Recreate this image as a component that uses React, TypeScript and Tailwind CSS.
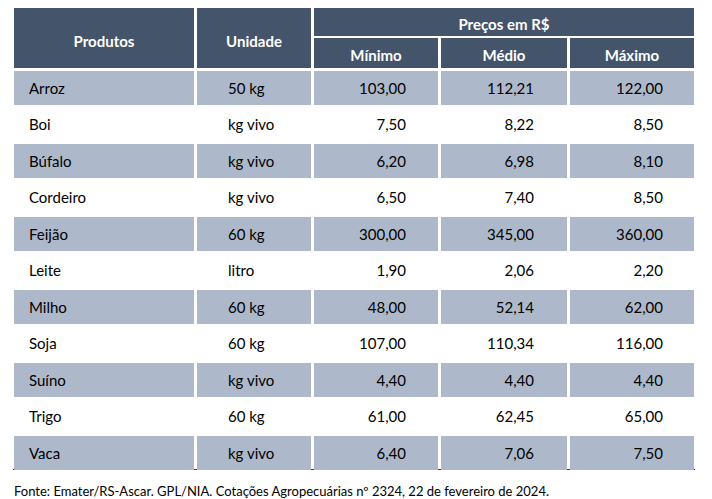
const rows = [
  ["Arroz", "50 kg", "103,00", "112,21", "122,00"],
  ["Boi", "kg vivo", "7,50", "8,22", "8,50"],
  ["Búfalo", "kg vivo", "6,20", "6,98", "8,10"],
  ["Cordeiro", "kg vivo", "6,50", "7,40", "8,50"],
  ["Feijão", "60 kg", "300,00", "345,00", "360,00"],
  ["Leite", "litro", "1,90", "2,06", "2,20"],
  ["Milho", "60 kg", "48,00", "52,14", "62,00"],
  ["Soja", "60 kg", "107,00", "110,34", "116,00"],
  ["Suíno", "kg vivo", "4,40", "4,40", "4,40"],
  ["Trigo", "60 kg", "61,00", "62,45", "65,00"],
  ["Vaca", "kg vivo", "6,40", "7,06", "7,50"],
];

const cols = "grid grid-cols-[180px_114px_124px_126px_124px] gap-x-[3px]";

export default function App() {
  return (
    <div className="w-[712px] h-[499px] bg-white pt-[8px] pl-[14px] font-['Lato','Liberation_Sans',sans-serif] text-[15px] text-black">
      {/* Header */}
      <div className={`${cols} grid-rows-[28px_30px] gap-y-[2px] w-[680px] text-white font-bold`}>
        <div className="row-span-2 bg-[#44546a] flex items-center justify-center pt-[6px]">Produtos</div>
        <div className="row-span-2 bg-[#44546a] flex items-center justify-center pt-[6px]">Unidade</div>
        <div className="col-span-3 bg-[#44546a] flex items-center justify-center pt-[4px]">Preços em R$</div>
        <div className="bg-[#44546a] flex items-center justify-center pt-[4px]">Mínimo</div>
        <div className="bg-[#44546a] flex items-center justify-center pt-[4px]">Médio</div>
        <div className="bg-[#44546a] flex items-center justify-center pt-[4px]">Máximo</div>
      </div>

      {/* Body */}
      <div className="mt-[1.5px] w-[680px]">
        {rows.map((r, i) => {
          const shade = i % 2 === 0 ? "bg-[#adb9ca]" : "";
          return (
            <div key={r[0]} className={`${cols} h-[36.5px] py-[1.5px]`}>
              <div className={`${shade} flex items-center pl-[15px]`}>{r[0]}</div>
              <div className={`${shade} flex items-center pl-[31px]`}>{r[1]}</div>
              <div className={`${shade} flex items-center justify-end pr-[32px]`}>{r[2]}</div>
              <div className={`${shade} flex items-center justify-end pr-[33px]`}>{r[3]}</div>
              <div className={`${shade} flex items-center justify-end pr-[31px]`}>{r[4]}</div>
            </div>
          );
        })}
      </div>
      <div className="-mt-[2px] -ml-[1px] w-[682px] h-px bg-[#3a3a3a]" />

      <p className="mt-[12px] leading-[18px] text-[13px]">
        Fonte: Emater/RS-Ascar. GPL/NIA. Cotações Agropecuárias nº 2324, 22 de fevereiro de 2024.
      </p>
    </div>
  );
}
